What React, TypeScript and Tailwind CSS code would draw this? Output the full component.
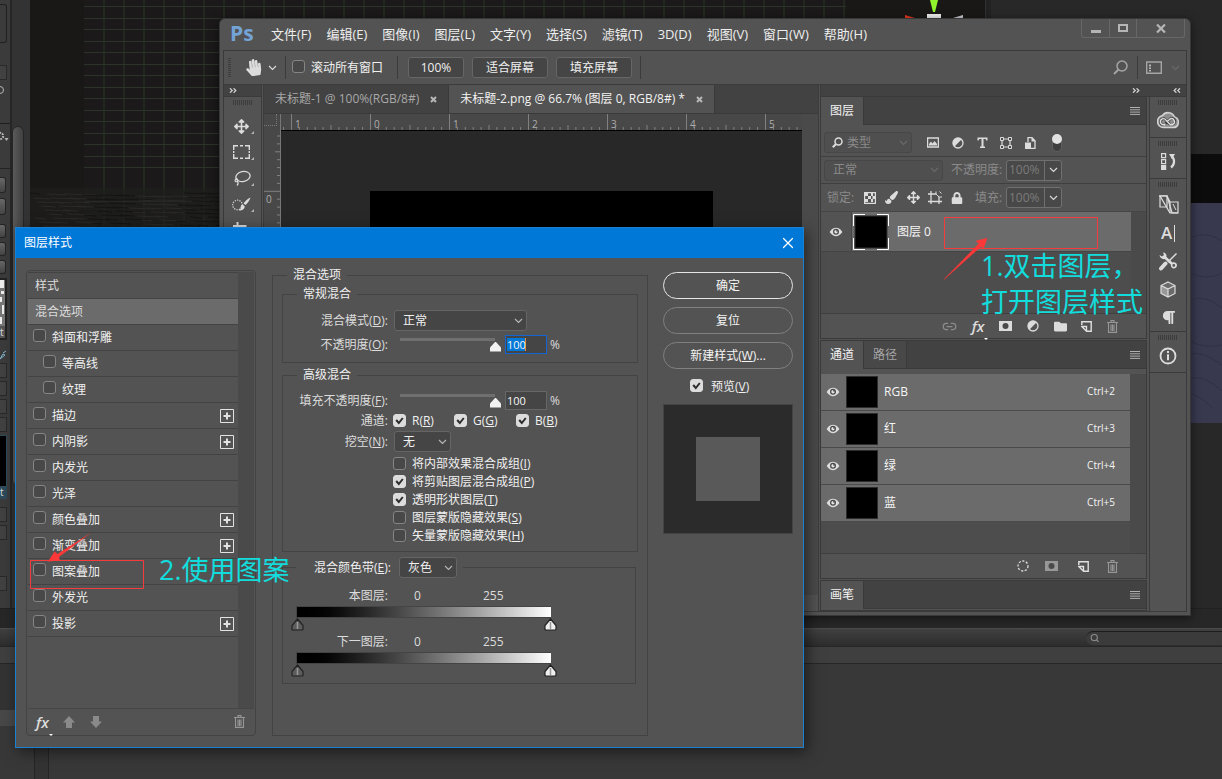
import React from "react";
import { FaArrowsAlt, FaFolder, FaHandPaper, FaLock, FaPaintBrush, FaParagraph } from "react-icons/fa";
import { Link2, Search, Trash2, X } from "lucide-react";

type Kids = { children?: React.ReactNode };

/* ---------- shared bits ---------- */

function Svg({ w, h, children, className = "" }: { w: number; h: number; className?: string } & Kids) {
  return (
    <svg width={w} height={h} viewBox={`0 0 ${w} ${h}`} fill="none" className={`shrink-0 ${className}`} aria-hidden="true">
      {children}
    </svg>
  );
}

function Chevron({ className = "" }: { className?: string }) {
  return (
    <Svg w={9} h={6} className={className}>
      <path d="M1 1l3.5 3.5L8 1" stroke="currentColor" strokeWidth="1.1" />
    </Svg>
  );
}

function Check({ id, checked = false, className = "" }: { id: string; checked?: boolean; className?: string }) {
  return (
    <span className={`grid size-[13px] shrink-0 ${className}`}>
      <input
        id={id}
        type="checkbox"
        defaultChecked={checked}
        className="peer m-0 size-[13px] appearance-none rounded-[3px] border border-[#858585] bg-[#484848] [grid-area:1/1] checked:border-[#dcdcdc] checked:bg-[#dcdcdc]"
      />
      <svg viewBox="0 0 13 13" fill="none" className="pointer-events-none hidden size-[13px] [grid-area:1/1] peer-checked:block" aria-hidden="true">
        <path d="M3.2 6l2.6 3L9.8 4" stroke="#2c2c2c" strokeWidth="2" />
      </svg>
    </span>
  );
}

function Dropdown({ id, label, options, className = "", dim = false, children }: { id: string; label: string; options: string[]; className?: string; dim?: boolean } & Kids) {
  return (
    <span className={`relative flex h-[21px] items-center rounded-[3px] border ${dim ? "border-[#474747] bg-[#4f4f4f] text-[#8a8a8a]" : "border-[#656565] bg-[#454545] text-[#f0f0f0]"} ${className}`}>
      {children}
      <select id={id} aria-label={label} className={`h-full min-w-0 flex-1 appearance-none bg-transparent text-xs leading-[18px] outline-none ${children ? "pl-1" : "pl-2"}`}>
        {options.map((o) => (
          <option key={o}>{o}</option>
        ))}
      </select>
      <Chevron className={`pointer-events-none absolute right-[3px] ${dim ? "text-[#6a6a6a]" : "text-[#b8b8b8]"}`} />
    </span>
  );
}

function Grip({ className = "" }: { className?: string }) {
  return <div className={`h-[5px] w-5 bg-[repeating-linear-gradient(90deg,#3c3c3c_0_1px,transparent_1px_2px)] ${className}`} />;
}

function MenuLines() {
  return (
    <button aria-label="面板菜单" className="mr-1.5 text-[#b0b0b0]">
      <Svg w={10} h={8}>
        <path d="M0 .5h10M0 2.8h10M0 5.1h10M0 7.4h10" stroke="currentColor" />
      </Svg>
    </button>
  );
}

function DoubleArrow({ flip = false }: { flip?: boolean }) {
  return (
    <Svg w={8} h={5} className={`text-[#d0d0d0] ${flip ? "-scale-x-100" : ""}`}>
      <path d="M1 .3l2.2 2.2L1 4.7M4.6 .3l2.2 2.2-2.2 2.2" stroke="currentColor" strokeWidth="1.3" />
    </Svg>
  );
}

function Eye() {
  return (
    <Svg w={14} h={10}>
      <path d="M.6 5C3 1.6 5 .8 7 .8S11 1.600 13.400 5C11 8.400 9 9.200 7 9.200S3 8.400 .6 5z" fill="#dedede" />
      <circle cx="7" cy="4.800" r="3" fill="#4a4a4a" />
      <circle cx="7" cy="4.800" r="1.700" fill="#e6e6e6" />
      <circle cx="8" cy="3.800" r=".9" fill="#4a4a4a" />
    </Svg>
  );
}

function AdjustIcon() {
  return (
    <Svg w={12} h={12}>
      <circle cx="6" cy="6" r="5" stroke="#dcdcdc" strokeWidth="1.300" />
      <path d="M9.700 2.300A5 5 0 0 0 2.300 9.700z" fill="#dcdcdc" />
    </Svg>
  );
}

function NewIcon() {
  return (
    <Svg w={11} h={11}>
      <path d="M.8 4V.8h9.400v9.400H6" stroke="#e0e0e0" strokeWidth="1.400" />
      <path d="M.8 5.500h4.700v4.700z" stroke="#e0e0e0" strokeWidth="1.400" />
    </Svg>
  );
}

function TrashIcon() {
  return (
    <Svg w={11} h={13} className="text-[#969696]">
      <path d="M0 2.500h11M4 2V.6h3V2M1.500 3v9.400h8V3M4 4.500v6.500M5.500 4.500v6.500M7 4.500v6.500" stroke="currentColor" strokeWidth="1.100" />
    </Svg>
  );
}

function MaskIcon({ color }: { color: string }) {
  return (
    <Svg w={13} h={10}>
      <path d="M0 0h13v10H0z" fill={color} />
      <circle cx="6.500" cy="5" r="3" fill="#4a4a4a" />
    </Svg>
  );
}

function Fx() {
  return (
    <span className="relative [font-family:'Open_Sans',sans-serif] text-[15px] leading-4 font-semibold text-[#dcdcdc] italic">
      fx
      <i className="absolute -right-1 -bottom-1.5 border-x-[2px] border-t-[2px] border-x-transparent border-t-white" />
    </span>
  );
}

function IconButton({ label, className = "", children }: { label: string; className?: string } & Kids) {
  return (
    <button aria-label={label} className={`flex shrink-0 items-center justify-center text-[#dcdcdc] ${className}`}>
      {children}
    </button>
  );
}

/* ---------- editor behind the windows ---------- */

const sceneRows = [6, 18, 29, 41, 52, 64, 75, 87, 98, 110, 121, 133, 144, 156, 167, 201];
const floorLines = Array.from({ length: 90 }, (_, i) => ({ x: (i * 47) % 190, y: 193 + ((i * 13) % 36), w: 10 + ((i * 7) % 22) }));

function InspectorEdge() {
  const field = "h-[15px] w-[7px] border border-l-0 border-[#292929] bg-[#414141]";
  const knob = "w-1.5 rounded-r-[3px] border border-l-0 border-[#242424] bg-gradient-to-b from-[#686868] to-[#444]";
  return (
    <div className="flex w-3 shrink-0 flex-col overflow-hidden border-r-2 border-[#262626] bg-[#3b3b3b]">
      <div className="mt-1 h-[39px] w-[7px] shrink-0 rounded-r-[3px] border border-l-0 border-[#202020]" />
      <div className={`${field} mt-[22px] shrink-0`} />
      <div className="mt-1.5 h-[38px] shrink-0 border-b border-[#1d1d1d]">
        <div className="-ml-1 size-2 rounded-full border border-[#b5b5b5]" />
      </div>
      <div className="h-[45px] shrink-0 border-b border-[#242424]">
        <Svg w={10} h={24} className="mt-1.5">
          <circle cx="0" cy="6" r="3.200" stroke="#b5b5b5" strokeWidth="2" strokeDasharray="1.800 1" />
          <path d="M4.500 8h4l-2 3z" fill="#b5b5b5" />
        </Svg>
      </div>
      <div className={`${knob} mt-[8px] h-4 shrink-0`} />
      <div className={`${knob} mt-[5px] h-[17px] shrink-0`} />
      <div className={`${knob} mt-[9px] h-[14px] shrink-0`} />
      <div className={`${knob} mt-1 h-[14px] shrink-0`} />
      <div className={`${knob} mt-1 h-[14px] shrink-0`} />
      <div className="mt-1 flex h-[62px] w-[7px] shrink-0 flex-col justify-between border-2 border-l-0 border-[#222] bg-[#777]">
        <Svg w={4} h={46}>
          <path d="M0 0h4v8H0zM1 11h3v3H1zM0 17h2v5H0zM2 25h2v9H2zM0 37h2v7H0z" fill="#ededed" />
        </Svg>
        <span className="bg-[#555] text-[10px] leading-3 text-[#ddd]">t</span>
      </div>
      <Svg w={7} h={10} className="mt-2.5">
        <path d="M0 9l3-5 2 1zM3 3l3-2" stroke="#80b4cc" />
      </Svg>
      {[0, 1, 2, 3].map((i) => (
        <div key={i} className={`${field} mt-[3px] shrink-0`} />
      ))}
      <div className="mt-[3px] flex h-[64px] w-[7px] shrink-0 flex-col justify-between border border-l-0 border-[#2c4a5a] bg-black">
        <span />
        <span className="bg-[#2c4a5a] text-[10px] leading-3 text-[#ddd]">t</span>
      </div>
      <div className={`${field} mt-2 shrink-0`} />
      <div className={`${field} mt-[3px] shrink-0`} />
      <div className={`${field} mt-9 shrink-0`} />
    </div>
  );
}

function EditorBackdrop() {
  return (
    <div className="flex min-h-screen flex-col bg-[#272727]">
      <div className="flex h-[608px]">
        <InspectorEdge />
        <div className="w-[18px] shrink-0 bg-[#333] pt-[126px]">
          <div className="h-[360px] w-3 rounded-full border border-[#262626] bg-gradient-to-r from-[#5a5a5a] to-[#404040]" />
        </div>
        <div className="min-w-0 flex-1 overflow-hidden bg-[#191816]">
          <svg width="960" height="230" viewBox="30 0 960 230" fill="none" aria-hidden="true">
            <rect x="84" y="0" width="762" height="230" fill="#1b191a" />
            {sceneRows.map((y) => (
              <path key={y} d={`M84 ${y + 0.5}H846`} stroke="#2b3428" />
            ))}
            {Array.from({ length: 38 }, (_, i) => (
              <path key={i} d={`M${104 + i * 20} 0V230`} stroke="#2a3627" />
            ))}
            <rect x="30" y="188" width="190" height="42" fill="#201f1e" fillOpacity=".6" />
            {floorLines.map((l, i) => (
              <path key={i} d={`M${30 + l.x} ${l.y}l${l.w} 1`} stroke={i % 2 ? "#2b2927" : "#151413"} />
            ))}
            <path d="M930 0h8l-3 12h-2z" fill="#8ff22c" />
            <path d="M927 14h14v4h-14z" fill="#eee" />
            <path d="M905 15l10 3h-10z" fill="#e2351d" />
            <path d="M963 15l-10 3h10z" fill="#c9c9d2" />
          </svg>
        </div>
        <div className="w-[6px] shrink-0 border-l border-[#303030] bg-[#222]" />
        <div className="flex w-[231px] shrink-0 flex-col bg-[#282828]">
          <div className="mt-[154px] h-[49px] bg-[#0c0c0c]" />
          <svg width="231" height="220" viewBox="0 0 231 220" fill="none" aria-hidden="true">
            <path d="M0 0h231v220H0z" fill="#38384f" />
            <path d="M199 35q16-8 32 3M199 70q18 8 32 0M199 97q16-6 32 8M199 138q14 8 32 4M199 152q10-6 32 10M199 176q12-6 32 12M199 190q14 5 22 15" stroke="#303045" />
          </svg>
        </div>
      </div>
      <div className="h-5 border-t border-[#202020]" />
      <div className="flex h-[18px] items-center justify-end border-t border-[#4b4b4b] bg-gradient-to-b from-[#404040] to-[#2d2d2d]">
        <label className="flex h-[14px] w-[136px] items-center rounded-l-full border-t border-[#1d1d1d] bg-[#3b3b3b] pl-1">
          <Search size={10} strokeWidth={3} className="text-[#8a8a8a]" />
          <input aria-label="搜索资源" className="h-3 w-full bg-transparent text-[10px] outline-none" />
        </label>
      </div>
      <div className="h-[18px] border-y border-[#262626] bg-[#3f3f3f]" />
      <div className="flex flex-1">
        <div className="flex w-[34px] flex-col bg-[#383838]">
          <div className="h-[46px] bg-[#333]" />
          <div className="h-4 bg-[#484848]" />
        </div>
        <div className="w-[15px] border-x border-[#252525] bg-[#333]" />
        <div className="flex-1 bg-[#383838]" />
      </div>
    </div>
  );
}

/* ---------- image editor window ---------- */

const menus = ["文件(F)", "编辑(E)", "图像(I)", "图层(L)", "文字(Y)", "选择(S)", "滤镜(T)", "3D(D)", "视图(V)", "窗口(W)", "帮助(H)"];

function MenuBar() {
  return (
    <div className="flex h-[31px] items-start">
      <span className="mt-0.5 ml-[7px] w-[41px] [font-family:'Open_Sans',sans-serif] text-[21px] leading-6 font-bold text-[#74a3d6]">Ps</span>
      <nav className="flex h-[30px] flex-1 items-center gap-[15px] text-[13px] leading-5 text-[#eee]">
        {menus.map((m) => (
          <button key={m} className="whitespace-nowrap">{m}</button>
        ))}
      </nav>
      <div className="mr-0.5 flex h-[19px] divide-x divide-[#676767] rounded-b-[3px] border border-t-0 border-[#676767] text-[#b5b5b5]">
        <IconButton label="最小化" className="w-7">
          <Svg w={10} h={10}><path d="M0 7h10v3H0z" fill="#b5b5b5" /></Svg>
        </IconButton>
        <IconButton label="最大化" className="w-[27px]">
          <Svg w={10} h={8}><path d="M1 1h8v6H1z" stroke="#b5b5b5" strokeWidth="2" /></Svg>
        </IconButton>
        <IconButton label="关闭" className="w-[47px]">
          <Svg w={10} h={9}><path d="M1 .5l8 8M9 .5l-8 8" stroke="#b5b5b5" strokeWidth="2.200" /></Svg>
        </IconButton>
      </div>
    </div>
  );
}

function OptionButton({ className, children }: { className: string } & Kids) {
  return (
    <button className={`h-[21px] rounded-[3px] border border-[#666] bg-[#454545] text-xs leading-4 text-[#f0f0f0] ${className}`}>{children}</button>
  );
}

function OptionsBar() {
  const rule = "h-[23px] w-px bg-[#3b3b3b]";
  return (
    <div className="flex h-[34px] items-center border-b border-[#3c3c3c]">
      <div className="ml-1 h-[19px] w-[3px] bg-[repeating-linear-gradient(#3c3c3c_0_1px,transparent_1px_2px)]" />
      <IconButton label="抓手工具" className="ml-3.5 gap-1.5">
        <FaHandPaper size={17} className="-rotate-6" />
        <Chevron />
      </IconButton>
      <div className={`${rule} mr-1.5 ml-2`} />
      <Check id="scroll-all" className="mb-0.5" />
      <label htmlFor="scroll-all" className="ml-1.5 text-xs leading-4 text-[#f0f0f0]">滚动所有窗口</label>
      <div className={`${rule} mr-2.5 ml-3.5`} />
      <OptionButton className="w-14">100%</OptionButton>
      <OptionButton className="ml-2 w-[76px]">适合屏幕</OptionButton>
      <OptionButton className="ml-2 w-[76px]">填充屏幕</OptionButton>
      <div className={`${rule} ml-2`} />
      <div className="flex-1" />
      <IconButton label="搜索">
        <Svg w={15} h={15}>
          <circle cx="9" cy="6" r="5" stroke="#a5a5a5" strokeWidth="1.500" />
          <path d="M5.500 9.500L1 14" stroke="#a5a5a5" strokeWidth="1.800" />
        </Svg>
      </IconButton>
      <div className={`${rule} mr-2 ml-[9px]`} />
      <IconButton label="工作区" className="mr-1.5 gap-[9px]">
        <Svg w={16} h={13}>
          <path d="M.7 1h14.600v11.300H.7z" stroke="#a5a5a5" strokeWidth="1.400" />
          <path d="M3 3.500h2v2H3zM3 6.500h2v1.500H3zM3 9h2v1.500H3z" fill="#b5b5b5" />
        </Svg>
        <Chevron className="text-[#6a6a6a]" />
      </IconButton>
    </div>
  );
}

function Tool({ label, children }: { label: string } & Kids) {
  return (
    <button aria-label={label} className="relative flex h-[26px] w-full items-center justify-center pr-0.5 text-[#dcdcdc]">
      {children}
      <i className="absolute right-[7px] bottom-[5px] border-b-[3px] border-l-[3px] border-b-[#b5b5b5] border-l-transparent" />
    </button>
  );
}

function Toolbar() {
  return (
    <div className="flex w-[38px] shrink-0 flex-col items-center border-r border-[#3c3c3c]">
      <div className="flex h-3 w-full items-center border-b border-[#3a3a3a] bg-[#424242] pl-[5px]">
        <DoubleArrow />
      </div>
      <Grip className="mt-[3px] mb-2" />
      <Tool label="移动工具"><FaArrowsAlt size={15} /></Tool>
      <Tool label="矩形选框工具">
        <Svg w={17} h={14}><path d="M5 .7H.7V5M.7 9v4.300H5M12 13.300h4.300V9M16.300 5V.7H12M7 .7h3M7 13.300h3M.7 6v2M16.300 6v2" stroke="currentColor" strokeWidth="1.400" /></Svg>
      </Tool>
      <Tool label="套索工具">
        <Svg w={18} h={17}>
          <ellipse cx="10" cy="6.500" rx="7.200" ry="5" transform="rotate(-12 10 6.500)" stroke="currentColor" strokeWidth="1.300" />
          <path d="M3 9c-2 1.500-.5 3.500 1 2.500s.5-3-1-2.500M4.500 11.500c1 1.500.5 3-.5 4" stroke="currentColor" strokeWidth="1.200" />
        </Svg>
      </Tool>
      <Tool label="快速选择工具">
        <Svg w={19} h={15}>
          <circle cx="5.500" cy="8" r="4.800" stroke="currentColor" strokeWidth="1.200" strokeDasharray="1.200 1.200" />
          <path d="M18.500 .5c-1 3-3 6-5 7.500l-2-1.500C13 4 16 1.500 18.500 .5zM10.800 7.500l2 2c-.5 3-3 4.500-5.800 4 1.500-1 1.500-2 1.700-3.500.2-1.500 1-2.300 2.100-2.500z" fill="currentColor" />
        </Svg>
      </Tool>
      <Tool label="裁剪工具">
        <Svg w={17} h={17}><path d="M4.500 0v12.500H17M0 4h12.500v13" stroke="currentColor" strokeWidth="2" /></Svg>
      </Tool>
    </div>
  );
}

function Tab({ active = false, title }: { active?: boolean; title: string }) {
  return (
    <div className={`flex h-full items-center gap-[11px] border-r border-[#3a3a3a] px-[11px] text-xs leading-4 ${active ? "bg-[#535353] text-[#f2f2f2]" : "text-[#a8a8a8]"}`}>
      <button className="whitespace-nowrap">{title}</button>
      <IconButton label="关闭标签">
        <Svg w={7} h={7}><path d="M1 1l5 5M6 1L1 6" stroke="#b8b8b8" strokeWidth="2" /></Svg>
      </IconButton>
    </div>
  );
}

function Rulers() {
  const majors = ["1", "0", "1", "2", "3", "4", "5"];
  return (
    <svg width="100%" height="16" className="block bg-[#484848]" aria-hidden="true">
      {Array.from({ length: 66 }, (_, i) => {
        const x = 10.5 + (i - 1) * 7.9;
        const major = (i - 1) % 10 === 0;
        return <path key={i} d={`M${x} ${major ? 0 : (i - 1) % 5 === 0 ? 11 : 13}V16`} stroke="#808080" />;
      })}
      {majors.map((m, i) => (
        <text key={i} x={14 + i * 79} y="14" fontSize="10" fill="#adadad">{m}</text>
      ))}
    </svg>
  );
}

function DocumentArea() {
  return (
    <div className="ml-px flex min-w-0 flex-1 flex-col border-x border-[#3c3c3c] bg-[#4a4a4a]">
      <div className="flex h-[29px] border-b border-[#3a3a3a] bg-[#424242]">
        <Tab title="未标题-1 @ 100%(RGB/8#)" />
        <Tab active title="未标题-2.png @ 66.7% (图层 0, RGB/8#) *" />
      </div>
      <div className="flex flex-1">
        <div className="flex w-[17px] shrink-0 flex-col border-r border-[#777] bg-[#484848]">
          <div className="flex h-4 flex-col"><div className="mr-[3px] h-3 border-r border-b border-dotted border-[#777]" /></div>
          <svg width="16" height="110" fill="none" aria-hidden="true">
            {Array.from({ length: 13 }, (_, i) => (
              <path key={i} d={`M${i === 7 ? 0 : i === 2 ? 11 : 13} ${6 + i * 7.9}H16`} stroke="#808080" />
            ))}
            <text x="2" y="73" fontSize="10" fill="#adadad">0</text>
          </svg>
        </div>
        <div className="flex min-w-0 flex-1 flex-col">
          <Rulers />
          <div className="flex-1 border-t border-black bg-[#282828] px-[89px] pt-[60px]">
            <div className="h-[340px] bg-black" />
          </div>
          <div className="h-4 bg-[#4a4a4a]" />
        </div>
        <div className="flex w-4 flex-col justify-end"><div className="h-4 bg-[#535353]" /></div>
      </div>
    </div>
  );
}

function PercentField({ id, label, labelWidth }: { id: string; label: string; labelWidth: string }) {
  return (
    <div className="flex items-center text-xs leading-4 text-[#8a8a8a]">
      <label htmlFor={id} className={`${labelWidth} whitespace-nowrap`}>{label}:</label>
      <div className="flex h-[21px] w-14 divide-x divide-[#707070] rounded-[3px] border border-[#707070] bg-[#484848]">
        <input id={id} defaultValue="100%" className="w-[38px] min-w-0 bg-transparent pl-0.5 text-[#7b7b7b] outline-none" />
        <IconButton label={`${label}选项`} className="flex-1"><Chevron /></IconButton>
      </div>
    </div>
  );
}

function PanelTabs({ tabs }: { tabs: string[] }) {
  return (
    <div className="flex h-7 items-stretch bg-[#424242] text-xs leading-4">
      {tabs.map((t, i) => (
        <button key={t} className={`w-[43px] border-r border-[#3a3a3a] ${i === 0 ? "bg-[#535353] text-[#f2f2f2]" : "border-b bg-[#484848] text-[#a5a5a5]"}`}>{t}</button>
      ))}
      <div className="flex flex-1 items-center justify-end border-b border-[#3a3a3a]"><MenuLines /></div>
    </div>
  );
}

function LayersPanel() {
  return (
    <section aria-label="图层" className="border border-t-0 border-[#3a3a3a]">
      <PanelTabs tabs={["图层"]} />
      <div className="flex h-8 items-center border-b border-[#3f3f3f] pt-1 pl-[3px]">
        <Dropdown dim id="layer-kind" label="类型" options={["类型"]} className="w-[88px]">
          <Svg w={11} h={11} className="ml-[7px] text-[#dcdcdc]">
            <circle cx="6.500" cy="4.500" r="3.500" stroke="currentColor" strokeWidth="1.500" />
            <path d="M4 7L.8 10.200" stroke="currentColor" strokeWidth="2" />
          </Svg>
        </Dropdown>
        <div className="ml-[15px] flex w-[109px] items-center justify-between">
          <IconButton label="像素图层">
            <Svg w={12} h={11}><path d="M.6 1h10.800v9H.6z" stroke="currentColor" strokeWidth="1.300" /><path d="M2 8.500V7l2-2.500L5.500 6.500 7.500 4 10 7v1.500z" fill="currentColor" /></Svg>
          </IconButton>
          <IconButton label="调整图层"><AdjustIcon /></IconButton>
          <IconButton label="文字图层">
            <Svg w={11} h={11}><path d="M.5 .5h10v3H9.300L8.700 2H6.500v7.500H8V11H3V9.500h1.500V2H2.300L1.700 3.500H.5z" fill="currentColor" /></Svg>
          </IconButton>
          <IconButton label="形状图层">
            <Svg w={12} h={12}><path d="M2 2h8v8H2z" stroke="currentColor" strokeWidth="1.200" /><path d="M.5 .5h3v3h-3zM8.500 .5h3v3h-3zM.5 8.500h3v3h-3zM8.500 8.500h3v3h-3z" fill="#4a4a4a" stroke="currentColor" /></Svg>
          </IconButton>
          <IconButton label="智能对象">
            <Svg w={11} h={12}><path d="M3 5V.7h4l3 3v7.600H6" stroke="currentColor" strokeWidth="1.300" /><path d="M6.500 .5v4h4z" fill="currentColor" /><path d="M0 5.500h6V12H0z" fill="currentColor" /></Svg>
          </IconButton>
        </div>
        <button aria-label="过滤开关" className="ml-4 h-[18px] w-2.5 rounded-full border border-[#606060] bg-[#3e3e3e]"><span className="-mt-2 -ml-px block size-2.5 rounded-full bg-[#e2e2e2]" /></button>
      </div>
      <div className="flex h-[27px] items-center gap-2 border-b border-[#3f3f3f] pl-[3px]">
        <Dropdown dim id="blend-mode" label="混合模式" options={["正常"]} className="w-[119px]" />
        <PercentField id="layer-opacity" label="不透明度" labelWidth="w-[55px]" />
      </div>
      <div className="flex h-7 items-center border-b border-[#464646] pl-1.5 text-xs leading-4 text-[#8a8a8a]">
        <span className="w-[37px]">锁定:</span>
        <div className="flex w-[99px] items-center justify-between">
          <IconButton label="锁定透明像素">
            <Svg w={12} h={12}><path d="M.6 .6h10.800v10.800H.6z" stroke="currentColor" strokeWidth="1.200" /><path d="M1 1h3v3H1zM7 1h2v3H7zM4 4h3v3H4zM8.500 4h3v3h-3zM1 7h3v3H1zM7 7h2v3H7z" fill="currentColor" /></Svg>
          </IconButton>
          <IconButton label="锁定图像像素"><FaPaintBrush size={13} /></IconButton>
          <IconButton label="锁定位置"><FaArrowsAlt size={13} /></IconButton>
          <IconButton label="锁定画板">
            <Svg w={14} h={13}><path d="M3 0v13M0 3h8M11 6v7M0 10.500h14" stroke="currentColor" strokeWidth="1.300" /><path d="M8 .5v2.500l3 3h3M11.500 .5l2 2" stroke="currentColor" /></Svg>
          </IconButton>
          <IconButton label="全部锁定"><FaLock size={12} /></IconButton>
        </div>
        <div className="ml-3"><PercentField id="layer-fill" label="填充" labelWidth="w-[31px]" /></div>
      </div>
      <div className="flex h-[101px] bg-[#4d4d4d]">
        <div className="min-w-0 flex-1">
          <div className="flex h-10 items-stretch border-b border-[#454545] bg-[#6b6b6b]">
            <div className="flex w-[31px] shrink-0 items-center justify-center border-r border-[#454545] bg-[#535353]"><Eye /></div>
            <button className="flex items-center gap-2 pl-px text-xs leading-4 text-[#f5f5f5]">
              <svg width="36" height="36" viewBox="0 0 36 36" fill="none" aria-hidden="true">
                <path d="M2 2h32v32H2z" fill="#000" stroke="#333" />
                <path d="M.5 12V.5H12M24 .5h11.500V12M35.500 24v11.500H24M12 35.500H.5V24" stroke="#fff" />
              </svg>
              图层 0
            </button>
          </div>
        </div>
        <div className="w-[15px] bg-[#4a4a4a]" />
      </div>
      <div className="flex h-[25px] items-center justify-between border-t border-[#404040] pr-7 pl-[121px]">
        <IconButton label="链接图层"><Link2 size={15} className="text-[#8c8c8c]" /></IconButton>
        <IconButton label="图层样式"><Fx /></IconButton>
        <IconButton label="添加蒙版"><MaskIcon color="#dcdcdc" /></IconButton>
        <IconButton label="新建调整图层"><AdjustIcon /></IconButton>
        <IconButton label="新建组"><FaFolder size={13} /></IconButton>
        <IconButton label="新建图层"><NewIcon /></IconButton>
        <IconButton label="删除图层"><TrashIcon /></IconButton>
      </div>
    </section>
  );
}

const channels = [["RGB", "Ctrl+2"], ["红", "Ctrl+3"], ["绿", "Ctrl+4"], ["蓝", "Ctrl+5"]];

function ChannelsPanel() {
  return (
    <section aria-label="通道" className="border border-[#3a3a3a]">
      <PanelTabs tabs={["通道", "路径"]} />
      <div className="mt-[5px] flex h-[179px] bg-[#4d4d4d]">
        <ul className="min-w-0 flex-1">
          {channels.map(([name, keys]) => (
            <li key={name}>
              <button className="flex h-[37px] w-full items-center border-b border-[#4a4a4a] bg-[#6b6b6b] pr-[15px] pl-[5px] text-left text-xs leading-4 text-[#f5f5f5]">
                <Eye />
                <span className="ml-1.5 size-8 border border-[#2d2d2d] bg-black" />
                <span className="ml-1.5 flex-1">{name}</span>
                <span className="pb-0.5 text-[10px] leading-4">{keys}</span>
              </button>
            </li>
          ))}
        </ul>
        <div className="w-4 bg-[#4a4a4a]" />
      </div>
      <div className="flex h-[25px] items-center justify-end border-t border-[#404040] pr-7">
        <IconButton label="载入选区">
          <Svg w={12} h={12}><circle cx="6" cy="6" r="5" stroke="currentColor" strokeWidth="1.300" strokeDasharray="2.200 1.500" /></Svg>
        </IconButton>
        <IconButton label="存储为通道" className="ml-4"><MaskIcon color="#989898" /></IconButton>
        <IconButton label="新建通道" className="ml-5"><NewIcon /></IconButton>
        <IconButton label="删除通道" className="ml-[18px]"><TrashIcon /></IconButton>
      </div>
    </section>
  );
}

function StripGroup({ className = "", children }: { className?: string } & Kids) {
  return (
    <div className={`flex flex-col items-center border-b border-[#3a3a3a] pt-[3px] ${className}`}>
      <Grip />
      {children}
    </div>
  );
}

function IconStrip() {
  return (
    <div className="flex w-[37px] shrink-0 flex-col border-l border-[#3a3a3a]">
      <StripGroup className="h-[41px]">
        <IconButton label="库" className="mt-1.5">
          <Svg w={22} h={18}>
            <path d="M6.500 16.500h9.500a5.300 5.300 0 0 0 1.500-10.400A6.800 6.800 0 0 0 5.500 4.600 6 6 0 0 0 6.500 16.500z" fill="#8d8d8d" stroke="#d2d2d2" strokeWidth="1.600" />
            <path d="M13 13.500L9 9.200a3 3 0 1 0-2.300 4.500M8.500 12.500L13 8a3 3 0 1 1 2.700 5.200" stroke="#3f3f3f" strokeWidth="2.600" />
            <path d="M13 13.500L9 9.200a3 3 0 1 0-2.300 4.500h1.500M10.500 10.300L13 8a3 3 0 1 1 2.700 5.500H13" stroke="#dedede" strokeWidth="1.400" />
          </Svg>
        </IconButton>
      </StripGroup>
      <StripGroup className="h-[41px]">
        <IconButton label="历史记录" className="mt-[7px]">
          <Svg w={15} h={17}>
            <path d="M.6 .6h4v4h-4zM.6 6.600h4v4h-4z" stroke="currentColor" strokeWidth="1.200" />
            <path d="M0 12h5.200v5H0zM8 1h6L11 6z" fill="currentColor" />
            <path d="M10.500 3.500c3.500 2 3.500 8-.5 11" stroke="currentColor" strokeWidth="2.200" />
          </Svg>
        </IconButton>
      </StripGroup>
      <StripGroup className="h-[153px]">
        <IconButton label="仿制源" className="mt-1 h-7">
          <Svg w={21} h={20}>
            <path d="M2 1h7v11H2zM12 7h8v11h-8z" stroke="currentColor" strokeWidth="1.200" />
            <path d="M1 .8h8l5 17h6M9 1l3 6M2 1l10 17" stroke="currentColor" strokeWidth="1.300" />
            <path d="M15 9l3 6" stroke="currentColor" />
          </Svg>
        </IconButton>
        <IconButton label="字符" className="h-7 [font-family:'Open_Sans',sans-serif] text-[17px] leading-5 font-semibold">A<span className="ml-0.5 h-[17px] w-px bg-[#dcdcdc]" /></IconButton>
        <IconButton label="工具预设" className="h-7">
          <Svg w={20} h={19}>
            <path d="M1.500 3l2.500 1.500L6 3 5 .6c2.500.2 4 2 3.300 4.200l6.200 5.700c2-.8 4.500.5 4.500 2.800 0 2-1.500 3.200-3.200 3.200-2 0-3.400-1.900-2.800-3.800L6.700 7C4.500 7.700 1.800 6 1.500 3zM15.800 12a1.400 1.400 0 1 0 0 2.800 1.400 1.400 0 0 0 0-2.800z" fill="currentColor" fillRule="evenodd" />
            <path d="M18.500 1.500L10 10" stroke="currentColor" strokeWidth="1.500" />
            <path d="M7.500 11.500L3 16.500" stroke="currentColor" strokeWidth="4" strokeLinecap="round" />
          </Svg>
        </IconButton>
        <IconButton label="3D" className="h-7">
          <Svg w={16} h={17}>
            <path d="M8 1l7 3.500v8L8 16l-7-3.500v-8z" fill="#6a6a6a" />
            <path d="M8 8v8l-7-3.500v-8z" fill="#999" />
            <path d="M8 1l7 3.500v8L8 16l-7-3.500v-8zM1 4.500L8 8l7-3.500M8 8v8" stroke="currentColor" strokeWidth="1.200" />
          </Svg>
        </IconButton>
        <IconButton label="段落" className="h-7"><FaParagraph size={15} /></IconButton>
      </StripGroup>
      <StripGroup className="h-[41px]">
        <IconButton label="信息" className="mt-[7px]">
          <Svg w={18} h={18}>
            <circle cx="9" cy="9" r="7.500" stroke="currentColor" strokeWidth="1.800" />
            <path d="M8 4h2v2H8zM8 7.300h2v6H8z" fill="currentColor" />
          </Svg>
        </IconButton>
      </StripGroup>
    </div>
  );
}

function PhotoWindow() {
  return (
    <main className="absolute top-[18px] right-[31px] left-[219px] rounded-t-md border border-[#383838] bg-[#535353] px-[3px] pb-[3px] shadow-[0_2px_10px_rgba(0,0,0,0.5)]">
      <MenuBar />
      <div className="border border-[#3a3a3a]">
        <OptionsBar />
        <div className="flex items-stretch">
          <Toolbar />
          <DocumentArea />
          <div className="ml-px flex w-[366px] shrink-0 flex-col">
            <div className="flex h-3 items-center justify-end gap-[33px] border-b border-l border-[#3a3a3a] bg-[#424242] pr-[5px]">
              <DoubleArrow />
              <DoubleArrow flip />
            </div>
            <div className="flex">
              <div className="flex min-w-0 flex-1 flex-col gap-px">
                <LayersPanel />
                <ChannelsPanel />
                <section aria-label="画笔" className="border border-[#3a3a3a] pb-px"><PanelTabs tabs={["画笔"]} /></section>
              </div>
              <div className="w-[2px]" />
              <IconStrip />
            </div>
          </div>
        </div>
      </div>
    </main>
  );
}

/* ---------- layer style dialog ---------- */

type Effect = { name: string; plus?: boolean; child?: boolean };
const effects: Effect[] = [
  { name: "斜面和浮雕" },
  { name: "等高线", child: true },
  { name: "纹理", child: true },
  { name: "描边", plus: true },
  { name: "内阴影", plus: true },
  { name: "内发光" },
  { name: "光泽" },
  { name: "颜色叠加", plus: true },
  { name: "渐变叠加", plus: true },
  { name: "图案叠加" },
  { name: "外发光" },
  { name: "投影", plus: true },
];

function StyleList() {
  const row = "flex h-[26px] w-full items-center border-b border-[#434343]";
  return (
    <div className="mr-px flex w-[230px] shrink-0 flex-col rounded-sm border border-[#434343] p-px">
      <div className="flex flex-1">
        <ul className="flex-1 border-t border-[#434343] text-xs leading-4 text-[#f0f0f0]">
          <li><button className={`${row} pl-[7px] text-[#dcdcdc]`}>样式</button></li>
          <li><button className={`${row} bg-[#6b6b6b] pl-[7px] text-[#dcdcdc]`}>混合选项</button></li>
          {effects.map((e) => (
            <li key={e.name} className={`${row} pr-1 ${e.child ? "pl-[15px]" : "pl-[5px]"}`}>
              <Check id={`fx-${e.name}`} className="mb-1" />
              <label htmlFor={`fx-${e.name}`} className="ml-1.5 flex-1">{e.name}</label>
              {e.plus && (
                <IconButton label={`添加${e.name}`}>
                  <Svg w={14} h={14}>
                    <path d="M.5 .5h13v13H.5z" stroke="#e2e2e2" />
                    <path d="M7 3.500v7M3.500 7h7" stroke="#e2e2e2" strokeWidth="2" />
                  </Svg>
                </IconButton>
              )}
            </li>
          ))}
        </ul>
        <div className="w-4 bg-[#4a4a4a]" />
      </div>
      <div className="flex h-[26px] items-center border-t border-[#464646] pr-[9px] pl-2">
        <IconButton label="效果"><Fx /></IconButton>
        <IconButton label="上移" className="ml-3.5"><Svg w={12} h={12}><path d="M6 0l6 6.500H9V12H3V6.500H0z" fill="#8a8a8a" /></Svg></IconButton>
        <IconButton label="下移" className="ml-[15px]"><Svg w={12} h={12}><path d="M6 12l6-6.500H9V0H3v5.500H0z" fill="#8a8a8a" /></Svg></IconButton>
        <IconButton label="删除效果" className="ml-auto"><TrashIcon /></IconButton>
      </div>
    </div>
  );
}

function Key({ k }: { k: string }) {
  return <>(<u className="underline-offset-1">{k}</u>)</>;
}

function FieldRow({ id, label, k, className = "", children }: { id?: string; label: string; k?: string; className?: string } & Kids) {
  return (
    <div className={`flex items-center ${className}`}>
      <label htmlFor={id} className="w-[105px] shrink-0 text-right text-xs leading-4 whitespace-nowrap text-[#dcdcdc]">
        {label}{k && <Key k={k} />}:
      </label>
      {children}
    </div>
  );
}

function PercentSlider({ id, selected = false }: { id: string; selected?: boolean }) {
  return (
    <>
      <input
        type="range"
        aria-label="百分比"
        defaultValue={100}
        className="ml-3 h-[14px] w-[101px] appearance-none bg-[linear-gradient(#6f6f6f,#6f6f6f)] bg-[length:95px_3px] bg-no-repeat pt-1 [&::-webkit-slider-thumb]:h-2.5 [&::-webkit-slider-thumb]:w-[11px] [&::-webkit-slider-thumb]:appearance-none [&::-webkit-slider-thumb]:bg-[#f2f2f2] [&::-webkit-slider-thumb]:[clip-path:polygon(50%_0,100%_60%,100%_100%,0_100%,0_60%)]"
      />
      <input
        id={id}
        defaultValue="100"
        className={`ml-1 h-[19px] w-[42px] border pl-px text-[11px] leading-4 text-[#f5f5f5] outline-none ${
          selected
            ? "border-[#1464d2] bg-[#454545] bg-[linear-gradient(90deg,#0078d7_18px,#e8873a_18px)] bg-[length:19px_13px] bg-[position:1px_2px] bg-no-repeat"
            : "border-[#666] bg-[#454545]"
        }`}
      />
      <span className="ml-[3px] text-xs leading-4 text-[#dcdcdc]">%</span>
    </>
  );
}

function CheckRow({ id, label, k, checked = false }: { id: string; label: string; k: string; checked?: boolean }) {
  return (
    <div className="flex h-[18px] items-center gap-1.5 text-xs leading-4 text-[#f0f0f0]">
      <Check id={id} checked={checked} className="mb-0.5" />
      <label htmlFor={id}>{label}<Key k={k} /></label>
    </div>
  );
}

function Handle({ fill, className = "" }: { fill: string; className?: string }) {
  return (
    <Svg w={13} h={13} className={className}>
      <path d="M6.500 1L12 7.500v3.500q0 1-1 1H2q-1 0-1-1V7.500z" fill={fill} stroke="#222" strokeWidth="1.200" />
      <path d="M6.500 4v7" stroke="#999" strokeWidth="1.500" />
    </Svg>
  );
}

function BlendRange({ label }: { label: string }) {
  return (
    <div className="h-[46px]">
      <div className="flex h-[18px] items-center text-xs leading-4 text-[#dcdcdc]">
        <span className="w-[105px] text-right">{label}:</span>
        <span className="w-[53px] pl-[26px]">0</span>
        <span className="pl-[42px]">255</span>
      </div>
      <div className="mt-px ml-[13px] h-3 w-[255px] border border-r-0 border-[#444] bg-gradient-to-r from-black to-white" />
      <div className="ml-2 grid w-[266px]">
        <div className="flex justify-between [grid-area:1/1]">
          <Handle fill="#5c5c5c" />
          <Handle fill="#f0f0f0" />
        </div>
        <input type="range" min={0} max={255} defaultValue={0} aria-label={label} className="h-[13px] w-full opacity-0 [grid-area:1/1]" />
      </div>
    </div>
  );
}

function BlendOptions() {
  const box = "border border-[#434343]";
  const legend = "h-[18px] px-1.5 text-xs leading-[18px] text-[#f0f0f0]";
  return (
    <fieldset className={`${box} -mt-1 w-[376px] shrink-0 px-[9px]`}>
      <legend className={`${legend} ml-[5px]`}>混合选项</legend>
      <fieldset className={`${box} mt-px h-[78px]`}>
        <legend className={`${legend} ml-[14px]`}>常规混合</legend>
        <FieldRow id="mode" label="混合模式" k="D" className="mt-[7px]">
          <Dropdown id="mode" label="混合模式" options={["正常"]} className="ml-1.5 w-[133px]" />
        </FieldRow>
        <FieldRow id="opacity" label="不透明度" k="O" className="mt-1">
          <PercentSlider id="opacity" selected />
        </FieldRow>
      </fieldset>
      <fieldset className={`${box} mt-[3px] h-[186px]`}>
        <legend className={`${legend} ml-[14px]`}>高级混合</legend>
        <FieldRow id="fill-opacity" label="填充不透明度" k="F" className="mt-[7px]">
          <PercentSlider id="fill-opacity" />
        </FieldRow>
        <FieldRow label="通道" className="mt-0.5">
          <div className="ml-[5px] flex">
            <div className="w-[61px]"><CheckRow id="ch-r" label="R" k="R" checked /></div>
            <div className="w-[62px]"><CheckRow id="ch-g" label="G" k="G" checked /></div>
            <CheckRow id="ch-b" label="B" k="B" checked />
          </div>
        </FieldRow>
        <FieldRow id="knockout" label="挖空" k="N" className="mt-px">
          <Dropdown id="knockout" label="挖空" options={["无"]} className="ml-1.5 w-[57px]" />
        </FieldRow>
        <div className="mt-[3px] ml-[110px]">
          <CheckRow id="o1" label="将内部效果混合成组" k="I" />
          <CheckRow id="o2" label="将剪贴图层混合成组" k="P" checked />
          <CheckRow id="o3" label="透明形状图层" k="T" checked />
          <CheckRow id="o4" label="图层蒙版隐藏效果" k="S" />
          <CheckRow id="o5" label="矢量蒙版隐藏效果" k="H" />
        </div>
      </fieldset>
      <fieldset className={`${box} mt-[5px] mr-0.5 mb-[51px] h-[127px]`}>
        <legend className="ml-[13px] pr-1.5 pl-[18px] text-xs leading-4 text-[#f0f0f0]">
          <span className="flex items-center gap-2">
            <label htmlFor="blend-if">混合颜色带<Key k="E" />:</label>
            <Dropdown id="blend-if" label="混合颜色带" options={["灰色"]} className="w-[58px]" />
          </span>
        </legend>
        <div className="mt-[9px]">
          <BlendRange label="本图层" />
          <BlendRange label="下一图层" />
        </div>
      </fieldset>
    </fieldset>
  );
}

function LayerStyleDialog() {
  const pill = "h-[27px] w-full rounded-full border text-xs leading-4 text-[#f5f5f5]";
  return (
    <div role="dialog" aria-label="图层样式" className="absolute top-[227px] left-[15px] w-[789px] border border-[#1a80d2] bg-[#535353] shadow-[3px_4px_14px_rgba(0,0,0,0.5)]">
      <header className="flex h-[30px] items-center justify-between bg-[#0078d7] px-1.5 text-xs leading-4 text-white">
        <span className="pl-0.5">图层样式</span>
        <button aria-label="关闭"><X size={18} strokeWidth={1.600} /></button>
      </header>
      <div className="flex gap-[15px] px-2.5 pt-3 pb-[11px]">
        <StyleList />
        <BlendOptions />
        <div className="flex min-w-0 flex-1 flex-col items-center gap-2 pt-0.5">
          <button className={`${pill} border-[#e5e5e5]`}>确定</button>
          <button className={`${pill} border-[#808080]`}>复位</button>
          <button className={`${pill} border-[#808080]`}>新建样式<Key k="W" />...</button>
          <div className="flex h-[19px] w-full items-center gap-2 pl-[27px] text-xs leading-4 text-[#f0f0f0]">
            <Check id="preview" checked className="mb-0.5" />
            <label htmlFor="preview">预览<Key k="V" /></label>
          </div>
          <div className="grid h-[130px] w-full place-items-center border border-[#434343] bg-[#2b2b2b]">
            <div className="size-16 bg-[#595959]" />
          </div>
        </div>
      </div>
    </div>
  );
}

/* ---------- tutorial callouts ---------- */

function Callouts() {
  const note = "pointer-events-none absolute text-[27px] leading-9 whitespace-nowrap text-[#12dcdc]";
  return (
    <>
      <svg width="1222" height="779" viewBox="0 0 1222 779" fill="none" className="pointer-events-none absolute top-0 left-0" aria-hidden="true">
        <path d="M944.500 217.500h153v31h-153zM30.500 560.500h113v28h-113z" stroke="#f53b3b" />
        <path d="M944 279.500L979 243.500 976 241l11-2.700-3.500 10.200-2.500-2z" fill="#fb3838" stroke="#fb3838" strokeWidth=".5" />
        <path d="M92 532L57.500 554l-3-2.500-6.500 10 12-1-1-3.500z" fill="#fb3838" />
      </svg>
      <p className={`${note} top-[248px] left-[981px]`}>1.双击图层，<br />打开图层样式</p>
      <p className={`${note} top-[552px] left-[159px]`}>2.使用图案</p>
    </>
  );
}

export default function App() {
  return (
    <div className="relative min-h-screen overflow-hidden [font-family:'Open_Sans','Noto_Sans_CJK_SC',sans-serif]">
      <EditorBackdrop />
      <PhotoWindow />
      <LayerStyleDialog />
      <Callouts />
    </div>
  );
}
